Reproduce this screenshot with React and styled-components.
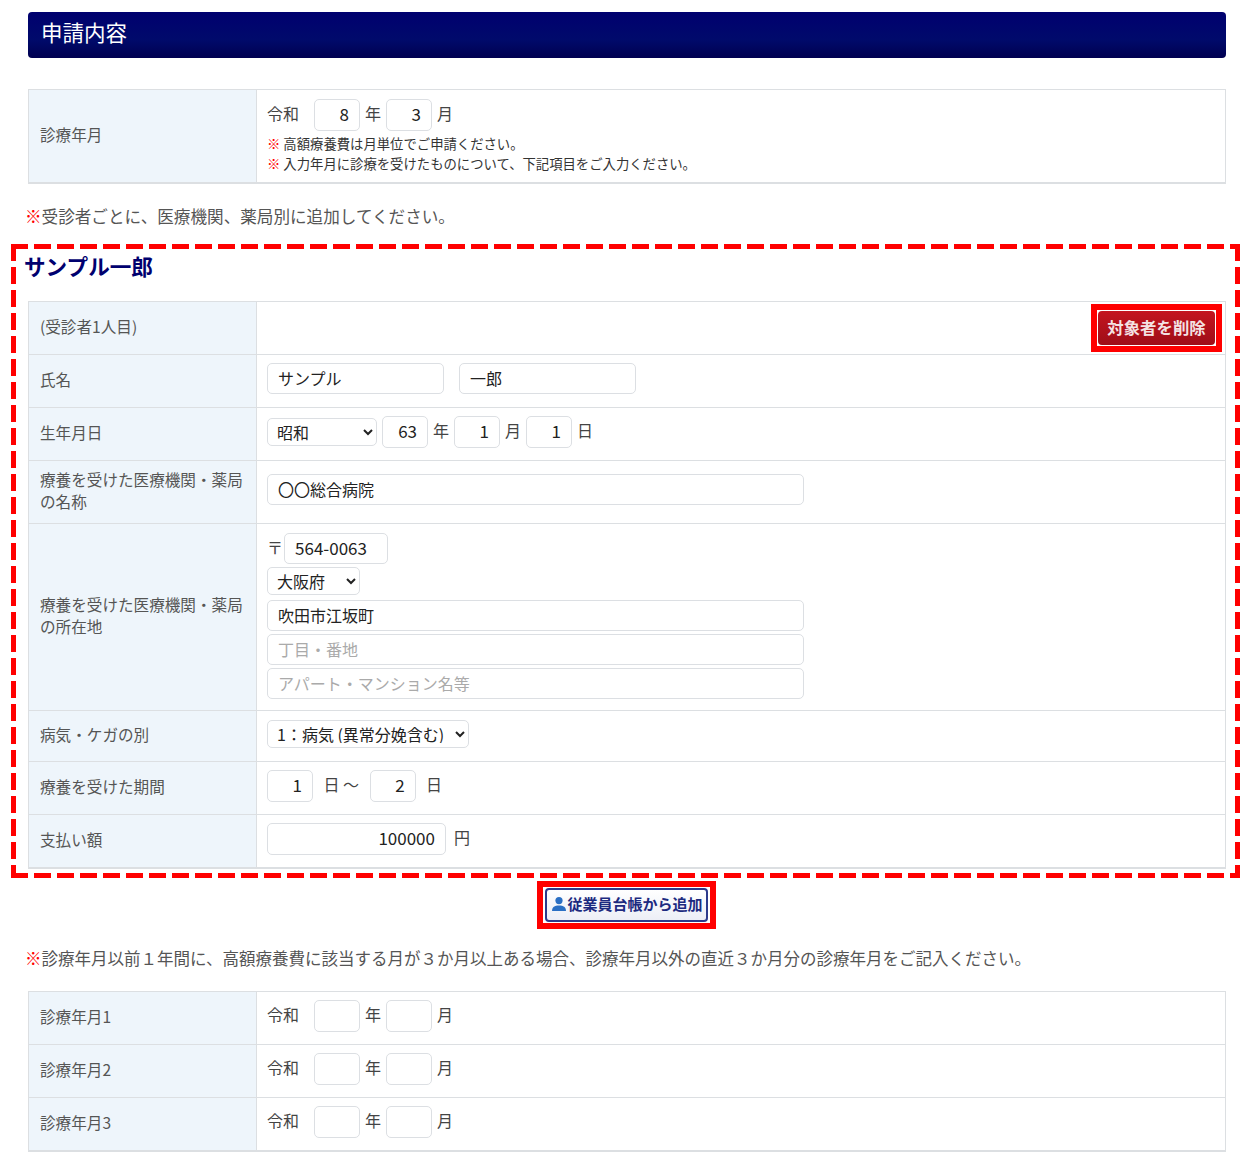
import styled, { createGlobalStyle } from "styled-components"

const GlobalStyle = createGlobalStyle`
    html, body {
        margin: 0;
        padding: 0;
        background: #fff;
    }
    body {
        font-family: "Noto Sans CJK JP", "Noto Sans", sans-serif;
        color: #444;
    }
    * {
        box-sizing: border-box;
    }
`

const Page = styled.div`
    width: 1253px;
    height: 1158px;
    overflow: hidden;
    padding: 12px 13px 0 11px;
`

const Header = styled.h1`
    margin: 0 0 31px 17px;
    width: 1198px;
    height: 46px;
    padding: 0 0 8px 13px;
    display: flex;
    align-items: center;
    font-size: 21.5px;
    font-weight: 400;
    color: #fff;
    border-radius: 4px;
    background: linear-gradient(#00006f, #000a6b 60%, #000050);
`

const Table = styled.div`
    width: 1198px;
    margin-left: ${(p) => p.$inset || 17}px;
    border: 1px solid #dcdfe2;
    border-bottom-width: 2px;
`

const Row = styled.div`
    display: grid;
    grid-template-columns: 228px 1fr;
    height: ${(p) => p.$h}px;
    border-bottom: 1px solid #dcdfe2;

    &:last-child {
        border-bottom: 0;
    }
`

const Label = styled.div`
    display: flex;
    align-items: center;
    padding: 0 8px 5px 11px;
    background: #eef5fb;
    border-right: 1px solid #dcdfe2;
    font-size: 15.6px;
    line-height: 22px;
    color: #555;
`

const Cell = styled.div`
    display: flex;
    flex-direction: column;
    justify-content: ${(p) => p.$top ? "flex-start" : "center"};
    padding: ${(p) => p.$top ? `${p.$top}px 10px 0` : "0 10px 5px"};
    gap: ${(p) => p.$gap || 0}px;
`

const ActionCell = styled.div`
    display: flex;
    align-items: center;
    justify-content: flex-end;
    padding: 0 3px 1px 0;
`

const Line = styled.div`
    display: flex;
    align-items: center;
    gap: ${(p) => p.$gap ?? 5}px;
    font-size: 16px;
    color: #444;

    span {
        margin-top: -4px;
    }
`

const Era = styled.span`
    margin-right: 10px;
`

const Input = styled.input`
    width: ${(p) => p.$w || 46}px;
    height: ${(p) => p.$h || 32}px;
    padding: 0 ${(p) => p.$right ? 10 : 10}px ${(p) => p.$digits ? 3 : 2}px;
    border: 1px solid #dcdfe3;
    border-radius: 5px;
    background: #fff;
    color: #222;
    font-family: "Noto Sans CJK JP", "Noto Sans", sans-serif;
    font-size: ${(p) => p.$digits ? 17 : 16}px;
    text-align: ${(p) => p.$right ? "right" : "left"};
    outline: none;

    &::placeholder {
        color: #aaa;
        opacity: 1;
    }
`

const Select = styled.select`
    width: ${(p) => p.$w}px;
    height: 28px;
    padding: 0 3px 4px 5px;
    margin-bottom: ${(p) => p.$mb || 0}px;
    border: 1px solid #dcdfe3;
    border-radius: 5px;
    background: #fff;
    color: #222;
    font-family: "Noto Sans CJK JP", "Noto Sans", sans-serif;
    font-size: 16px;
`

const Small = styled.div`
    font-size: 13.35px;
    line-height: 20px;
    color: #333;
    margin-top: ${(p) => p.$mt || 0}px;
`

const Mark = styled.span`
    color: #f00;
    font-weight: ${(p) => p.$bold ? 700 : 400};
`

const Note = styled.p`
    margin: ${(p) => p.$m};
    font-size: ${(p) => p.$size}px;
    line-height: 24px;
    white-space: nowrap;
    color: #555;
`

const Dashed = styled.section`
    width: 1229px;
    height: 634px;
    padding: 9px 0 0 14px;
    background-image:
        repeating-linear-gradient(90deg, #f00 0 17px, transparent 17px 23px),
        repeating-linear-gradient(90deg, #f00 0 17px, transparent 17px 23px),
        repeating-linear-gradient(180deg, #f00 0 17px, transparent 17px 23px),
        repeating-linear-gradient(180deg, #f00 0 17px, transparent 17px 23px);
    background-size: 100% 5px, 100% 5px, 5px 100%, 5px 100%;
    background-position: top, bottom, left, right;
    background-repeat: no-repeat;
`

const Person = styled.h2`
    margin: 0 0 15px -1px;
    height: 33px;
    font-size: 21.6px;
    line-height: 25px;
    font-weight: 700;
    color: #00006f;
`

const DeleteFrame = styled.div`
    width: 131px;
    height: 48px;
    padding: 1px 1px 0;
    border: 6px solid #f00;
    background: #fff;
`

const DeleteButton = styled.button`
    display: block;
    width: 117px;
    height: 34px;
    padding: 0 0 2px;
    border: 0;
    border-radius: 4px;
    background: linear-gradient(#c4141f, #9e0e18);
    color: #f4e2e3;
    font-family: "Noto Sans CJK JP", "Noto Sans", sans-serif;
    font-size: 16.4px;
    font-weight: 700;
`

const AddWrap = styled.div`
    display: flex;
    justify-content: center;
    margin: 3px 0 0 0;
    padding-left: 1px;
`

const AddFrame = styled.div`
    width: 179px;
    height: 48px;
    border: 6px solid #f00;
    padding: 1px 2px;
    background: #fff;
`

const AddButton = styled.button`
    width: 100%;
    height: 34px;
    padding: 0 0 3px 4px;
    display: flex;
    align-items: center;
    gap: 1px;
    border: 2px solid #2c3a8c;
    border-radius: 4px;
    background: linear-gradient(#fff, #eceef6);
    color: #1c2a80;
    font-family: "Noto Sans CJK JP", "Noto Sans", sans-serif;
    font-size: 15px;
    font-weight: 700;
    white-space: nowrap;
`

const YearMonth = ({ year = "", month = "" }) => (
    <Line>
        <Era>令和</Era>
        <Input $right $digits readOnly value={year} />
        <span>年</span>
        <Input $right $digits readOnly value={month} />
        <span>月</span>
    </Line>
)

export default function App() {
    return (
        <Page>
            <GlobalStyle />
            <Header>申請内容</Header>

            <Table>
                <Row $h={92}>
                    <Label>診療年月</Label>
                    <Cell $top={9}>
                        <YearMonth year="8" month="3" />
                        <Small $mt={3}><Mark $bold>※</Mark> 高額療養費は月単位でご申請ください。</Small>
                        <Small><Mark $bold>※</Mark> 入力年月に診療を受けたものについて、下記項目をご入力ください。</Small>
                    </Cell>
                </Row>
            </Table>

            <Note $size={16.6} $m="20px 0 16px 14px"><Mark>※</Mark>受診者ごとに、医療機関、薬局別に追加してください。</Note>

            <Dashed>
                <Person>サンプル一郎</Person>
                <Table $inset={3}>
                    <Row $h={53}>
                        <Label>(受診者1人目)</Label>
                        <ActionCell>
                            <DeleteFrame>
                                <DeleteButton>対象者を削除</DeleteButton>
                            </DeleteFrame>
                        </ActionCell>
                    </Row>
                    <Row $h={53}>
                        <Label>氏名</Label>
                        <Cell>
                            <Line $gap={15}>
                                <Input $w={177} $h={31} readOnly value="サンプル" />
                                <Input $w={177} $h={31} readOnly value="一郎" />
                            </Line>
                        </Cell>
                    </Row>
                    <Row $h={53}>
                        <Label>生年月日</Label>
                        <Cell>
                            <Line>
                                <Select $w={110} defaultValue="昭和"><option>昭和</option></Select>
                                <Input $right $digits readOnly value="63" />
                                <span>年</span>
                                <Input $right $digits readOnly value="1" />
                                <span>月</span>
                                <Input $right $digits readOnly value="1" />
                                <span>日</span>
                            </Line>
                        </Cell>
                    </Row>
                    <Row $h={63}>
                        <Label>療養を受けた医療機関・薬局の名称</Label>
                        <Cell>
                            <Input $w={537} $h={31} readOnly value="〇〇総合病院" />
                        </Cell>
                    </Row>
                    <Row $h={187}>
                        <Label>療養を受けた医療機関・薬局の所在地</Label>
                        <Cell $top={9} $gap={3}>
                            <Line $gap={1}>
                                <span>〒</span>
                                <Input $w={104} $h={31} $digits readOnly value="564-0063" />
                            </Line>
                            <Select $w={93} $mb={2} defaultValue="大阪府"><option>大阪府</option></Select>
                            <Input $w={537} $h={31} readOnly value="吹田市江坂町" />
                            <Input $w={537} $h={31} readOnly placeholder="丁目・番地" />
                            <Input $w={537} $h={31} readOnly placeholder="アパート・マンション名等" />
                        </Cell>
                    </Row>
                    <Row $h={51}>
                        <Label>病気・ケガの別</Label>
                        <Cell>
                            <Select $w={202} defaultValue="1"><option value="1">1：病気 (異常分娩含む)</option></Select>
                        </Cell>
                    </Row>
                    <Row $h={53}>
                        <Label>療養を受けた期間</Label>
                        <Cell>
                            <Line $gap={10.5}>
                                <Input $right $digits readOnly value="1" />
                                <span>日 〜</span>
                                <Input $right $digits readOnly value="2" />
                                <span>日</span>
                            </Line>
                        </Cell>
                    </Row>
                    <Row $h={52}>
                        <Label>支払い額</Label>
                        <Cell>
                            <Line $gap={8}>
                                <Input $w={179} $right $digits readOnly value="100000" />
                                <span>円</span>
                            </Line>
                        </Cell>
                    </Row>
                </Table>
            </Dashed>

            <AddWrap>
                <AddFrame>
                    <AddButton>
                        <svg width="16" height="16" viewBox="0 0 16 16">
                            <circle cx="8" cy="4.6" r="3.6" fill="#2a6fc4" />
                            <path d="M1 15c0-4 2.6-5.6 7-5.6s7 1.6 7 5.6z" fill="#2a6fc4" />
                        </svg>
                        従業員台帳から追加
                    </AddButton>
                </AddFrame>
            </AddWrap>

            <Note $size={16.5} $m="17px 0 21px 14px"><Mark>※</Mark>診療年月以前１年間に、高額療養費に該当する月が３か月以上ある場合、診療年月以外の直近３か月分の診療年月をご記入ください。</Note>

            <Table>
                <Row $h={53}>
                    <Label>診療年月1</Label>
                    <Cell><YearMonth /></Cell>
                </Row>
                <Row $h={53}>
                    <Label>診療年月2</Label>
                    <Cell><YearMonth /></Cell>
                </Row>
                <Row $h={52}>
                    <Label>診療年月3</Label>
                    <Cell><YearMonth /></Cell>
                </Row>
            </Table>
        </Page>
    )
}
